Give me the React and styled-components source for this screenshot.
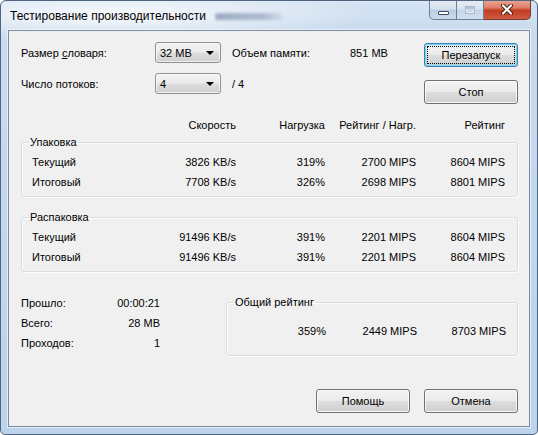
import React from "react";
import styled, { createGlobalStyle, css } from "styled-components";

const Global = createGlobalStyle`
  html, body { margin: 0; padding: 0; background: #ffffff; }
  body { font-family: "Liberation Sans", Arial, sans-serif; font-size: 11px; color: #000; }
  * { box-sizing: border-box; }
`;

const Window = styled.div`
  width: 538px;
  height: 435px;
  display: flex;
  flex-direction: column;
  border: 1px solid #4f6580;
  border-radius: 6px 6px 5px 5px;
  background:
    radial-gradient(ellipse 260px 26px at 110px 14px, rgba(255,255,255,0.85), rgba(255,255,255,0) 100%),
    linear-gradient(to bottom, #d6e4f3 0px, #c9dbee 30px, #bcd3ec 100%);
  overflow: hidden;
`;

const TitleBar = styled.div`
  height: 29px;
  display: flex;
  align-items: flex-start;
  padding-left: 9px;
`;

const Title = styled.div`
  font-size: 12px;
  line-height: 14px;
  margin-top: 8px;
  color: #000;
  display: flex;
  align-items: center;
`;

const Haze = styled.span`
  display: inline-block;
  width: 68px;
  height: 7px;
  margin-left: 9px;
  border-radius: 3px;
  background: linear-gradient(to right, rgba(95,115,150,0.55), rgba(110,130,165,0.45) 70%, rgba(140,160,190,0.15));
  filter: blur(1.6px);
`;

const Captions = styled.div`
  margin-left: auto;
  margin-right: 6px;
  display: flex;
  height: 20px;
  margin-top: -1px;
`;

const CapButton = styled.div`
  height: 20px;
  display: flex;
  align-items: center;
  justify-content: center;
  border: 1px solid #6b7f99;
  border-top: none;
  ${(p) => p.$w && css`width: ${p.$w}px;`}
  ${(p) =>
    p.$kind === "close"
      ? css`
          border-radius: 0 0 5px 0;
          border-left: none;
          border-color: #7a3b32;
          background: linear-gradient(to bottom, #e9a997 0%, #dd7d68 40%, #c43c22 55%, #cf5a3f 100%);
        `
      : p.$kind === "min"
      ? css`
          border-radius: 0 0 0 5px;
          background: linear-gradient(to bottom, #e6eef7 0%, #d6e2ef 45%, #bccfe4 55%, #c9daec 100%);
        `
      : css`
          border-left: none;
          background: linear-gradient(to bottom, #e6eef7 0%, #d9e4f0 45%, #c7d7e8 55%, #d2e0ef 100%);
        `}
`;

const MinGlyph = styled.span`
  width: 11px;
  height: 4px;
  margin-top: 7px;
  background: #fff;
  border: 1px solid #3b4a5e;
  border-radius: 1px;
`;

const MaxGlyph = styled.span`
  width: 10px;
  height: 8px;
  border: 1px solid #a9b9cc;
  box-shadow: inset 0 2px 0 #b7c6d7, inset 0 0 0 1px #e6eef7;
`;

const Client = styled.div`
  flex: 1;
  margin: 0 7px 7px 7px;
  background: #f0f0f0;
  border: 1px solid #7b8ca3;
  box-shadow: 0 0 0 1px rgba(255,255,255,0.55);
  display: flex;
  flex-direction: column;
  padding: 11px 11px 13px 12px;
  line-height: 14px;
`;

const Top = styled.div`
  display: flex;
  align-items: flex-start;
`;

const Fields = styled.div`
  display: flex;
  flex-direction: column;
  gap: 10px;
`;

const FieldRow = styled.div`
  display: flex;
  align-items: center;
  height: 21px;
`;

const FieldLabel = styled.span`
  width: ${(p) => p.$w}px;
  flex: none;
`;

const Combo = styled.div`
  width: 66px;
  height: 21px;
  flex: none;
  display: flex;
  align-items: center;
  padding: 0 0 0 4px;
  border: 1px solid #8e8f8f;
  border-radius: 3px;
  background: linear-gradient(to bottom, #f2f2f2 0%, #ebebeb 48%, #dddddd 52%, #cfcfcf 100%);
  box-shadow: inset 0 0 0 1px rgba(255,255,255,0.7);
  margin-right: 11px;
`;

const ComboText = styled.span`
  flex: 1;
`;

const Arrow = styled.span`
  width: 0;
  height: 0;
  margin-right: 6px;
  border-left: 4px solid transparent;
  border-right: 4px solid transparent;
  border-top: 4px solid #000;
`;

const Buttons = styled.div`
  margin-left: auto;
  padding-top: 1px;
  display: flex;
  flex-direction: column;
  gap: 13px;
`;

const Button = styled.div`
  position: relative;
  width: 94px;
  height: 24px;
  display: flex;
  align-items: center;
  justify-content: center;
  border: 1px solid ${(p) => (p.$default ? "#3c7fb1" : "#707070")};
  border-radius: 3px;
  background: linear-gradient(to bottom, #f2f2f2 0%, #ebebeb 48%, #dddddd 52%, #cfcfcf 100%);
  box-shadow: inset 0 0 0 1px rgba(255,255,255,0.8);
  ${(p) =>
    p.$default &&
    css`
      box-shadow: inset 0 0 0 1px #7ed2f1, inset 0 0 2px 2px rgba(140,215,245,0.35);
      &::after {
        content: "";
        position: absolute;
        inset: 2px;
        border: 1px dotted #000;
      }
    `}
`;

const Grid = styled.div`
  display: grid;
  grid-template-columns: 120px 84px 89px 91px 89px;
  align-items: center;
`;

const Header = styled(Grid)`
  margin-top: 14px;
  padding-left: 11px;
  height: 14px;
`;

const Cell = styled.span`
  text-align: ${(p) => (p.$left ? "left" : "right")};
  white-space: nowrap;
`;

const Group = styled.fieldset`
  margin: ${(p) => p.$mt || 0}px 0 0 ${(p) => (p.$pushRight ? "auto" : "0")};
  padding: ${(p) => p.$pt}px 11px ${(p) => p.$pb}px 10px;
  border: 1px solid #d5dfe5;
  border-radius: 3px;
  min-width: 0;
  box-shadow: inset 1px 1px 0 rgba(255,255,255,0.8), 1px 1px 0 rgba(255,255,255,0.8);
  ${(p) => p.$w && css`width: ${p.$w}px; flex: none;`}
`;

const Legend = styled.legend`
  padding: 0 1px;
  margin-left: -3px;
  line-height: 14px;
`;

const Row = styled(Grid)`
  height: 20px;
`;

const Bottom = styled.div`
  display: flex;
  align-items: flex-start;
  margin-top: 21px;
`;

const Stats = styled.div`
  display: grid;
  grid-template-columns: 80px 59px;
  grid-auto-rows: 20px;
  align-items: center;
`;

const TotalGrid = styled.div`
  display: grid;
  grid-template-columns: 1fr 91px 89px;
  height: 20px;
  align-items: center;
`;

const Footer = styled.div`
  margin-top: auto;
  display: flex;
  justify-content: flex-end;
  gap: 14px;
`;

const groups = [
  {
    name: "Упаковка",
    rows: [
      ["Текущий", "3826 KB/s", "319%", "2700 MIPS", "8604 MIPS"],
      ["Итоговый", "7708 KB/s", "326%", "2698 MIPS", "8801 MIPS"],
    ],
  },
  {
    name: "Распаковка",
    rows: [
      ["Текущий", "91496 KB/s", "391%", "2201 MIPS", "8604 MIPS"],
      ["Итоговый", "91496 KB/s", "391%", "2201 MIPS", "8604 MIPS"],
    ],
  },
];

function CloseGlyph() {
  return (
    <svg width="14" height="11" viewBox="0 0 14 11">
      <path d="M3 1.5 L11 9.5 M11 1.5 L3 9.5" stroke="#4a1a12" strokeWidth="4" strokeLinecap="round" />
      <path d="M3 1.5 L11 9.5 M11 1.5 L3 9.5" stroke="#ffffff" strokeWidth="2.2" strokeLinecap="round" />
    </svg>
  );
}

export default function App() {
  return (
    <>
      <Global />
      <Window>
        <TitleBar>
          <Title>
            Тестирование производительности
            <Haze />
          </Title>
          <Captions>
            <CapButton $kind="min" $w={28}>
              <MinGlyph />
            </CapButton>
            <CapButton $kind="max" $w={27}>
              <MaxGlyph />
            </CapButton>
            <CapButton $kind="close" $w={47}>
              <CloseGlyph />
            </CapButton>
          </Captions>
        </TitleBar>
        <Client>
          <Top>
            <Fields>
              <FieldRow>
                <FieldLabel $w={134}>
                  Размер <u>с</u>ловаря:
                </FieldLabel>
                <Combo>
                  <ComboText>32 MB</ComboText>
                  <Arrow />
                </Combo>
                <FieldLabel $w={118}>Объем памяти:</FieldLabel>
                <span>851 MB</span>
              </FieldRow>
              <FieldRow>
                <FieldLabel $w={134}>Число потоков:</FieldLabel>
                <Combo>
                  <ComboText>4</ComboText>
                  <Arrow />
                </Combo>
                <span>/ 4</span>
              </FieldRow>
            </Fields>
            <Buttons>
              <Button $default>Перезапуск</Button>
              <Button>Стоп</Button>
            </Buttons>
          </Top>

          <Header>
            <span />
            <Cell>Скорость</Cell>
            <Cell>Нагрузка</Cell>
            <Cell>Рейтинг / Нагр.</Cell>
            <Cell>Рейтинг</Cell>
          </Header>

          {groups.map((g, gi) => (
            <Group key={g.name} $mt={gi === 0 ? 3 : 13} $pt={3} $pb={4}>
              <Legend>{g.name}</Legend>
              {g.rows.map((r) => (
                <Row key={r[0]}>
                  <Cell $left>{r[0]}</Cell>
                  <Cell>{r[1]}</Cell>
                  <Cell>{r[2]}</Cell>
                  <Cell>{r[3]}</Cell>
                  <Cell>{r[4]}</Cell>
                </Row>
              ))}
            </Group>
          ))}

          <Bottom>
            <Stats>
              <Cell $left>Прошло:</Cell>
              <Cell>00:00:21</Cell>
              <Cell $left>Всего:</Cell>
              <Cell>28 MB</Cell>
              <Cell $left>Проходов:</Cell>
              <Cell>1</Cell>
            </Stats>
            <Group $w={292} $mt={2} $pt={12} $pb={14} $pushRight>
              <Legend>Общий рейтинг</Legend>
              <TotalGrid>
                <Cell>359%</Cell>
                <Cell>2449 MIPS</Cell>
                <Cell>8703 MIPS</Cell>
              </TotalGrid>
            </Group>
          </Bottom>

          <Footer>
            <Button>Помощь</Button>
            <Button>Отмена</Button>
          </Footer>
        </Client>
      </Window>
    </>
  );
}
